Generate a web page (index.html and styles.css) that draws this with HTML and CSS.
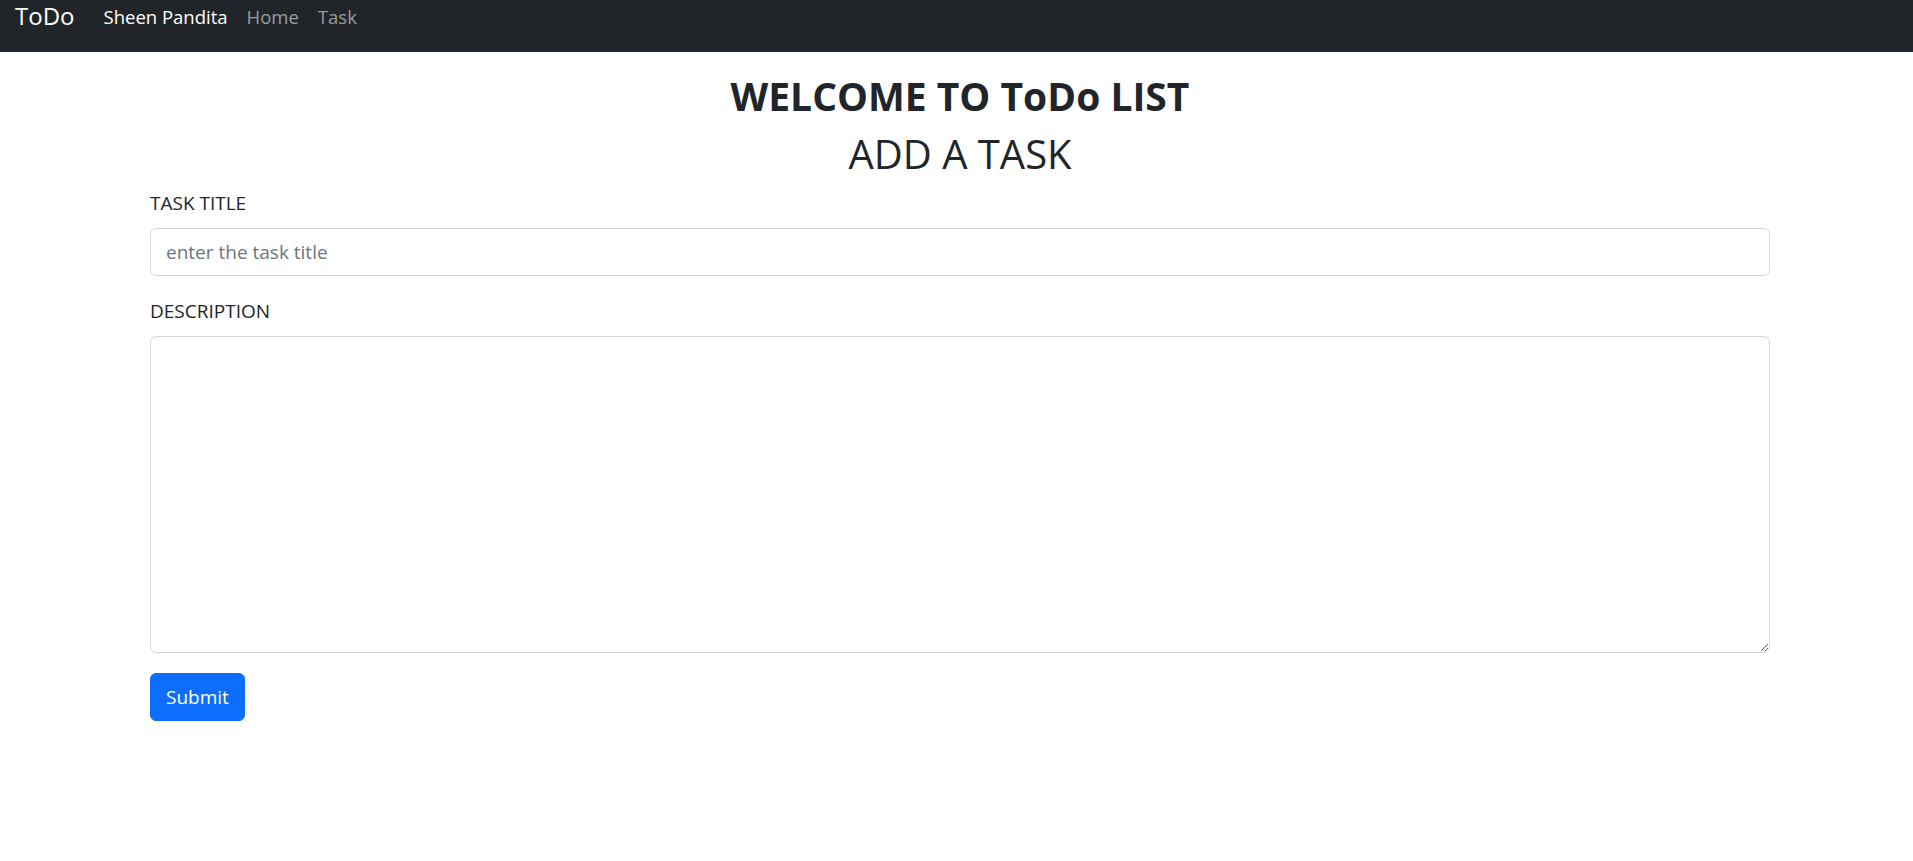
FILE: index.html
```html
<!DOCTYPE html>
<html lang="en">
<head>
<meta charset="utf-8">
<title>ToDo</title>
<link rel="stylesheet" href="styles.css">
</head>
<body>
<nav class="navbar">
  <a class="brand" href="#">ToDo</a>
  <ul class="nav">
    <li><a class="nav-link active" href="#">Sheen Pandita</a></li>
    <li><a class="nav-link" href="#">Home</a></li>
    <li><a class="nav-link" href="#">Task</a></li>
  </ul>
</nav>
<main class="container">
  <h1 class="title">WELCOME TO ToDo LIST</h1>
  <h2 class="subtitle">ADD A TASK</h2>
  <form class="task-form">
    <div class="field">
      <label class="label" for="title">TASK TITLE</label>
      <input class="control" id="title" type="text" placeholder="enter the task title">
    </div>
    <div class="field">
      <label class="label" for="desc">DESCRIPTION</label>
      <textarea class="control area" id="desc"></textarea>
    </div>
    <button class="btn" type="submit">Submit</button>
  </form>
</main>
</body>
</html>
```
FILE: styles.css
```css
* { box-sizing: border-box; }
html, body { margin: 0; padding: 0; }
body {
  font-family: "Open Sans", "Noto Sans", sans-serif;
  color: #212529;
  background: #fff;
}
.navbar {
  display: flex;
  align-items: flex-start;
  height: 52px;
  padding: 0 15px;
  background: #212529;
}
.brand {
  font-size: 24px;
  line-height: 30px;
  padding-top: 1px;
  color: #fff;
  text-decoration: none;
  margin-right: 19px;
}
.nav {
  display: flex;
  list-style: none;
  margin: 0;
  padding: 0;
}
.nav-link {
  display: block;
  font-size: 18.5px;
  line-height: 30px;
  padding: 2px 9px 0 10px;
  color: rgba(255, 255, 255, 0.55);
  text-decoration: none;
}
.nav-link.active { color: #fff; }
.container {
  width: 1620px;
  margin-left: 150px;
}
.title {
  margin: 20px 0 0;
  font-size: 39px;
  line-height: 48px;
  font-weight: 700;
  text-align: center;
}
.subtitle {
  margin: 10px 0 0;
  font-size: 40px;
  line-height: 48px;
  font-weight: 500;
  text-align: center;
}
.task-form { margin-top: 10px; }
.field {
  display: flex;
  flex-direction: column;
  margin-bottom: 20px;
}
.label {
  font-size: 19px;
  line-height: 30px;
  margin-bottom: 10px;
}
.control {
  display: block;
  width: 100%;
  height: 48px;
  padding: 8px 15px;
  font-family: inherit;
  font-size: 19px;
  line-height: 30px;
  color: #212529;
  border: 1px solid #d4d8dd;
  border-radius: 6px;
  background: #fff;
}
.control::placeholder { color: #6c757d; }
.area { height: 317px; resize: vertical; }
.btn {
  height: 48px;
  padding: 0 15px;
  font-family: inherit;
  font-size: 19px;
  color: #fff;
  background: #0d6efd;
  border: 1px solid #0d6efd;
  border-radius: 6px;
}
```
